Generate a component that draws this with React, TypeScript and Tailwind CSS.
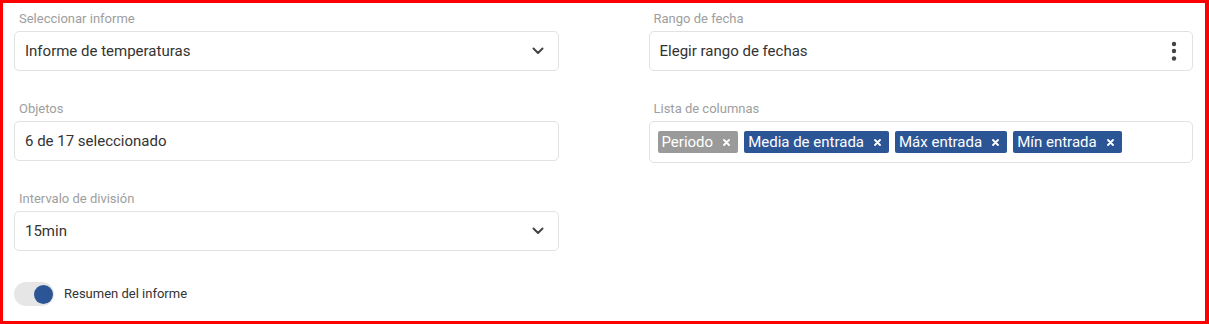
import React from "react";

const Chevron = () => (
  <svg width="12" height="8" viewBox="0 0 12 8" className="shrink-0">
    <path d="M1.5 1.5 L6 6 L10.5 1.5" fill="none" stroke="#444" strokeWidth="2" strokeLinecap="round" strokeLinejoin="round" />
  </svg>
);

const Dots = () => (
  <svg width="6" height="20" viewBox="0 0 6 20" className="shrink-0">
    <circle cx="3" cy="3" r="2.2" fill="#444" />
    <circle cx="3" cy="10" r="2.2" fill="#444" />
    <circle cx="3" cy="17.5" r="2.2" fill="#444" />
  </svg>
);

const Label = ({ children }: { children: React.ReactNode }) => (
  <div className="h-[18px] text-[13px] leading-[18px] text-[#9e9e9e] pl-[5px] mb-[3px]">{children}</div>
);

const Field = ({ text, icon }: { text: string; icon?: React.ReactNode }) => (
  <div className="h-10 border border-[#e2e2e2] rounded-[5px] flex items-center justify-between pl-[10px] pr-[14px]">
    <span className="text-[15px] text-[#333]">{text}</span>
    {icon}
  </div>
);

const Chip = ({ text, gray }: { text: string; gray?: boolean }) => (
  <div
    className={
      "h-[22px] rounded-[2px] flex items-center pl-[4px] pr-[8px] gap-[10px] text-white text-[15px] font-normal " +
      (gray ? "bg-[#9a9a9a]" : "bg-[#2c5595]")
    }
  >
    <span className="leading-[22px]">{text}</span>
    <svg width="7" height="7" viewBox="0 0 7 7">
      <path d="M1 1 L6 6 M6 1 L1 6" stroke="white" strokeWidth="1.8" strokeLinecap="round" />
    </svg>
  </div>
);

export default function App() {
  return (
    <div
      className="w-[1209px] h-[324px] bg-white border-t-[3px] border-l-[3px] border-b-[3px] border-r-[4px] border-[#ff0000] overflow-hidden"
      style={{ fontFamily: "Roboto, 'Liberation Sans', sans-serif" }}
    >
      <div className="pl-[11px] pr-[12px] pt-[7px] grid grid-cols-2 gap-x-[90px]">
        <div className="flex flex-col">
          <Label>Seleccionar informe</Label>
          <Field text="Informe de temperaturas" icon={<Chevron />} />
          <div className="h-[29px]" />
          <Label>Objetos</Label>
          <Field text="6 de 17 seleccionado" />
          <div className="h-[29px]" />
          <Label>Intervalo de división</Label>
          <Field text="15min" icon={<Chevron />} />
          <div className="flex items-center mt-[31px] gap-[10px]">
            <div className="w-10 h-6 rounded-full bg-[#e6e6e6] flex items-center justify-end pr-[1px]">
              <div className="w-[19px] h-[19px] rounded-full bg-[#2c5595]" />
            </div>
            <span className="text-[13px] text-[#333]">Resumen del informe</span>
          </div>
        </div>
        <div className="flex flex-col">
          <Label>Rango de fecha</Label>
          <div className="h-10 border border-[#e2e2e2] rounded-[5px] flex items-center justify-between pl-[10px] pr-[15px]">
            <span className="text-[15px] text-[#333]">Elegir rango de fechas</span>
            <Dots />
          </div>
          <div className="h-[29px]" />
          <Label>Lista de columnas</Label>
          <div className="h-[42px] border border-[#e2e2e2] rounded-[5px] flex items-center pl-[8px] gap-[6px]">
            <Chip text="Periodo" gray />
            <Chip text="Media de entrada" />
            <Chip text="Máx entrada" />
            <Chip text="Mín entrada" />
          </div>
        </div>
      </div>
    </div>
  );
}
